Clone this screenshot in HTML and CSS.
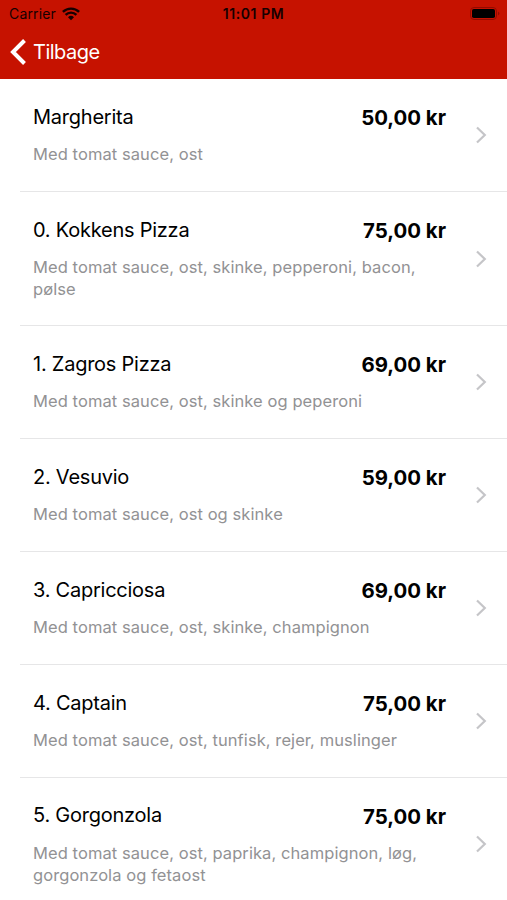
FILE: index.html
```html
<!DOCTYPE html>
<html lang="da">
<head>
<meta charset="utf-8">
<title>Menu</title>
<link rel="stylesheet" href="styles.css">
</head>
<body>
<header class="header">
  <div class="status">
    <div class="carrier"><span class="carrier-name">Carrier</span>
      <svg class="wifi" width="18" height="14" viewBox="0 0 18 14"><path d="M.9 4.9a11.6 11.6 0 0 1 16.2 0M3.6 7.9a7.6 7.6 0 0 1 10.8 0" fill="none" stroke="#160000" stroke-width="2.4"/><path d="M6 10.2a4.4 4.4 0 0 1 6 0L9 13.2z" fill="#160000"/></svg>
    </div>
    <span class="time">11:01 PM</span>
    <svg class="battery" width="31" height="13" viewBox="0 0 31 13"><rect x=".5" y=".5" width="26" height="12" rx="3.5" fill="none" stroke="#930b00"/><rect x="2" y="2" width="23" height="9" rx="1.8" fill="#000"/><path d="M28 4.5q3 2 0 4z" fill="#930b00"/></svg>
  </div>
  <div class="nav">
    <svg class="back" width="17" height="28" viewBox="0 0 17 28"><path d="M14.5 2.5L3 14l11.5 11.5" fill="none" stroke="#fff" stroke-width="4"/></svg>
    <span class="back-label">Tilbage</span>
  </div>
</header>
<main class="list">
  <article class="row"><div class="info"><h2 class="name">Margherita</h2><p class="desc">Med tomat sauce, ost</p></div><span class="price">50,00 kr</span><svg class="chevron" viewBox="0 0 12 18"><path d="M2 1.5l7.8 7.5L2 16.5"/></svg></article>
  <article class="row tall"><div class="info"><h2 class="name">0. Kokkens Pizza</h2><p class="desc">Med tomat sauce, ost, skinke, pepperoni, bacon,<br>pølse</p></div><span class="price">75,00 kr</span><svg class="chevron" viewBox="0 0 12 18"><path d="M2 1.5l7.8 7.5L2 16.5"/></svg></article>
  <article class="row"><div class="info"><h2 class="name">1. Zagros Pizza</h2><p class="desc">Med tomat sauce, ost, skinke og peperoni</p></div><span class="price">69,00 kr</span><svg class="chevron" viewBox="0 0 12 18"><path d="M2 1.5l7.8 7.5L2 16.5"/></svg></article>
  <article class="row"><div class="info"><h2 class="name">2. Vesuvio</h2><p class="desc">Med tomat sauce, ost og skinke</p></div><span class="price">59,00 kr</span><svg class="chevron" viewBox="0 0 12 18"><path d="M2 1.5l7.8 7.5L2 16.5"/></svg></article>
  <article class="row"><div class="info"><h2 class="name">3. Capricciosa</h2><p class="desc">Med tomat sauce, ost, skinke, champignon</p></div><span class="price">69,00 kr</span><svg class="chevron" viewBox="0 0 12 18"><path d="M2 1.5l7.8 7.5L2 16.5"/></svg></article>
  <article class="row"><div class="info"><h2 class="name">4. Captain</h2><p class="desc">Med tomat sauce, ost, tunfisk, rejer, muslinger</p></div><span class="price">75,00 kr</span><svg class="chevron" viewBox="0 0 12 18"><path d="M2 1.5l7.8 7.5L2 16.5"/></svg></article>
  <article class="row tall"><div class="info"><h2 class="name">5. Gorgonzola</h2><p class="desc">Med tomat sauce, ost, paprika, champignon, løg,<br>gorgonzola og fetaost</p></div><span class="price">75,00 kr</span><svg class="chevron" viewBox="0 0 12 18"><path d="M2 1.5l7.8 7.5L2 16.5"/></svg></article>
</main>
</body>
</html>
```
FILE: styles.css
```css
* { box-sizing: border-box; }
body { margin: 0; height: 900px; overflow: hidden; background: #fff; color: #000; font-family: Inter, "Liberation Sans", sans-serif; }
.header { height: 79px; background: #c61200; }
.status { height: 27px; display: grid; grid-template-columns: 1fr auto 1fr; align-items: center; padding: 0 6px 0 9px; color: #160000; font-size: 14px; }
.carrier { display: flex; align-items: center; gap: 6px; }
.carrier-name { letter-spacing: 0.15px; }
.time { font-weight: 600; font-size: 14px; letter-spacing: 0.6px; margin-right: 3px; }
.battery { justify-self: end; }
.nav { height: 50px; display: flex; align-items: center; padding-left: 10px; gap: 6px; color: #fff; }
.back-label { font-size: 20px; letter-spacing: -0.5px; }
.row { height: 112.8px; margin-left: 20px; padding: 0 20px 0 13px; display: flex; border-bottom: 1px solid #e6e6e7; }
.tall { height: 134.6px; }
.info { flex: 1; min-width: 0; padding-top: 24.8px; }
.name { margin: 0; font-size: 20px; line-height: 26px; font-weight: 400; letter-spacing: -0.24px; }
.desc { margin: 13.3px 0 0; font-size: 16.5px; line-height: 22px; letter-spacing: 0.08px; color: #929294; white-space: nowrap; }
.price { padding-top: 26px; font-size: 20.4px; line-height: 26px; font-weight: 700; white-space: nowrap; }
.chevron { width: 12px; height: 18px; margin-left: 29px; align-self: center; fill: none; stroke: #c5c5c8; stroke-width: 2.2; }
```
